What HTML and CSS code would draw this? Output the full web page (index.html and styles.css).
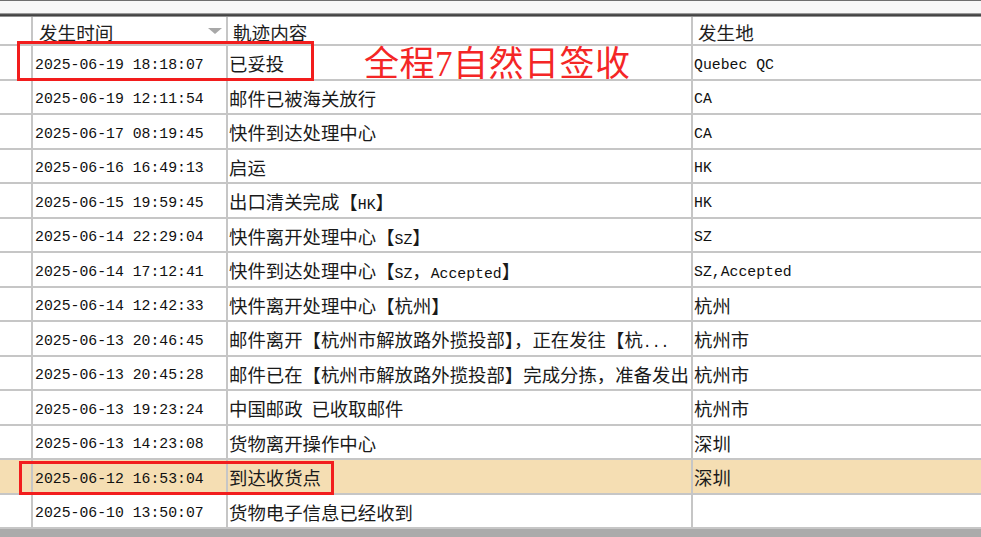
FILE: index.html
```html
<!DOCTYPE html>
<html lang="zh-CN">
<head>
<meta charset="utf-8">
<title>轨迹</title>
<link rel="stylesheet" href="styles.css">
</head>
<body>
<div class="window">
  <div class="topbar"></div>
  <div class="grid">
    <div class="row head">
      <div class="cell c0"></div>
      <div class="cell c1 hd">发生时间<span class="sort"></span></div>
      <div class="cell c2 hd">軌迹内容</div>
      <div class="cell c3 hd">发生地</div>
    </div>
    <div class="row">
      <div class="cell c0"></div>
      <div class="cell c1 en">2025-06-19 18:18:07</div>
      <div class="cell c2">已妥投</div>
      <div class="cell c3 en">Quebec QC</div>
    </div>
    <div class="row">
      <div class="cell c0"></div>
      <div class="cell c1 en">2025-06-19 12:11:54</div>
      <div class="cell c2">邮件已被海关放行</div>
      <div class="cell c3 en">CA</div>
    </div>
    <div class="row">
      <div class="cell c0"></div>
      <div class="cell c1 en">2025-06-17 08:19:45</div>
      <div class="cell c2">快件到达处理中心</div>
      <div class="cell c3 en">CA</div>
    </div>
    <div class="row">
      <div class="cell c0"></div>
      <div class="cell c1 en">2025-06-16 16:49:13</div>
      <div class="cell c2">启运</div>
      <div class="cell c3 en">HK</div>
    </div>
    <div class="row">
      <div class="cell c0"></div>
      <div class="cell c1 en">2025-06-15 19:59:45</div>
      <div class="cell c2">出口清关完成【<span class="en">HK</span>】</div>
      <div class="cell c3 en">HK</div>
    </div>
    <div class="row">
      <div class="cell c0"></div>
      <div class="cell c1 en">2025-06-14 22:29:04</div>
      <div class="cell c2">快件离开处理中心【<span class="en">SZ</span>】</div>
      <div class="cell c3 en">SZ</div>
    </div>
    <div class="row">
      <div class="cell c0"></div>
      <div class="cell c1 en">2025-06-14 17:12:41</div>
      <div class="cell c2">快件到达处理中心【<span class="en">SZ</span>，<span class="en">Accepted</span>】</div>
      <div class="cell c3 en">SZ,Accepted</div>
    </div>
    <div class="row">
      <div class="cell c0"></div>
      <div class="cell c1 en">2025-06-14 12:42:33</div>
      <div class="cell c2">快件离开处理中心【杭州】</div>
      <div class="cell c3">杭州</div>
    </div>
    <div class="row">
      <div class="cell c0"></div>
      <div class="cell c1 en">2025-06-13 20:46:45</div>
      <div class="cell c2">邮件离开【杭州市解放路外揽投部】，正在发往【杭<span class="en">...</span></div>
      <div class="cell c3">杭州市</div>
    </div>
    <div class="row">
      <div class="cell c0"></div>
      <div class="cell c1 en">2025-06-13 20:45:28</div>
      <div class="cell c2">邮件已在【杭州市解放路外揽投部】完成分拣，准备发出</div>
      <div class="cell c3">杭州市</div>
    </div>
    <div class="row">
      <div class="cell c0"></div>
      <div class="cell c1 en">2025-06-13 19:23:24</div>
      <div class="cell c2">中国邮政<span class="en">&nbsp;</span>已收取邮件</div>
      <div class="cell c3">杭州市</div>
    </div>
    <div class="row">
      <div class="cell c0"></div>
      <div class="cell c1 en">2025-06-13 14:23:08</div>
      <div class="cell c2">货物离开操作中心</div>
      <div class="cell c3">深圳</div>
    </div>
    <div class="row sel">
      <div class="cell c0"></div>
      <div class="cell c1 en">2025-06-12 16:53:04</div>
      <div class="cell c2">到达收货点</div>
      <div class="cell c3">深圳</div>
    </div>
    <div class="row">
      <div class="cell c0"></div>
      <div class="cell c1 en">2025-06-10 13:50:07</div>
      <div class="cell c2">货物电子信息已经收到</div>
      <div class="cell c3"></div>
    </div>
  </div>
  <div class="bottom"></div>

  <div class="mark mark1"></div>
  <div class="mark mark2"></div>
  <div class="note">全程<span class="num">7</span>自然日签收</div>
</div>
</body>
</html>
```

FILE: styles.css
```css
html, body {
  margin: 0;
  padding: 0;
  background: #ffffff;
  overflow: hidden;
}

.window {
  position: relative;
  width: 981px;
  height: 537px;
  display: flex;
  flex-direction: column;
  font-family: "Noto Sans CJK SC", sans-serif;
  font-size: 18.4px;
  color: #1a1a1a;
}

.topbar {
  height: 17px;
  flex: none;
  background: linear-gradient(to bottom,
    #6e6e6e 0, #6e6e6e 1.5px,
    #f7f7f7 1.5px, #f7f7f7 13.5px,
    #9a9a9a 13.5px, #2c2c2c 15px, #5a5a5a 16px, #c8c8c8 17px);
}

.grid {
  display: flex;
  flex-direction: column;
  flex: none;
}

.row {
  display: grid;
  grid-template-columns: 31px 195px 465px 1fr;
  height: 34.5px;
  box-sizing: border-box;
  border-bottom: 2px solid #c6c6c6;
  background: #ffffff;
}

.row.head {
  height: 29px;
}

.row.sel {
  background: #f5deb3;
}

.cell {
  display: block;
  white-space: nowrap;
  overflow: hidden;
  box-sizing: border-box;
  line-height: 29px;
  padding-top: 3px;
}

.cell.en {
  line-height: 28px;
  padding-top: 4.5px;
}

.head .cell {
  line-height: 25px;
  padding-top: 2px;
}

.c1, .c2, .c3 {
  border-left: 2px solid #c6c6c6;
}

.c1 { padding-left: 2px; }
.c2 { padding-left: 1px; }
.c3 { padding-left: 1px; }

.hd {
  color: #1e1e1e;
  font-size: 18.6px;
}
.c1.hd { padding-left: 6px; position: relative; }
.c2.hd { padding-left: 5px; }
.c3.hd { padding-left: 5px; }

.sort {
  position: absolute;
  right: 4px;
  top: 11px;
  width: 0;
  height: 0;
  border-left: 7px solid transparent;
  border-right: 7px solid transparent;
  border-top: 6px solid #a8a8a8;
}

.en {
  font-family: "Liberation Mono", "Noto Sans CJK SC", monospace;
  font-size: 14.8px;
  color: #101010;
}

.bottom {
  flex: 1;
  background: #ababab;
}

.mark {
  position: absolute;
  border: 3px solid #f21d1d;
  box-sizing: border-box;
}

.mark1 {
  left: 17px;
  top: 41px;
  width: 297px;
  height: 40px;
}

.mark2 {
  left: 19px;
  top: 461px;
  width: 315px;
  height: 34px;
}

.note {
  position: absolute;
  left: 364px;
  top: 43px;
  font-size: 35px;
  line-height: 36px;
  letter-spacing: 0.5px;
  color: #f42626;
  white-space: nowrap;
}

.note .num {
  font-family: "Liberation Serif", serif;
}
```
